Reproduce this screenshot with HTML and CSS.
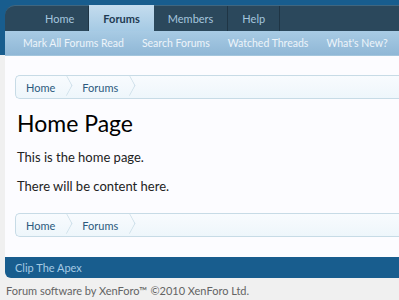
FILE: index.html
```html
<!DOCTYPE html>
<html lang="en">
<head>
    <meta charset="UTF-8">
    <title>Home Page</title>
    <link rel="stylesheet" href="styles.css">
</head>
<body>
    <div class="header">
        <div class="navTabs">
            <a class="tab">Home</a>
            <a class="tab selected">Forums</a>
            <a class="tab">Members</a>
            <a class="tab">Help</a>
        </div>
        <div class="subNav">
            <a>Mark All Forums Read</a>
            <a>Search Forums</a>
            <a>Watched Threads</a>
            <a>What's New?</a>
        </div>
    </div>
    <div class="content">
        <div class="breadcrumb">
            <span class="crumb">Home</span>
            <span class="crumb">Forums</span>
        </div>
        <h1>Home Page</h1>
        <p>This is the home page.</p>
        <p>There will be content here.</p>
        <div class="breadcrumb bottom">
            <span class="crumb">Home</span>
            <span class="crumb">Forums</span>
        </div>
    </div>
    <div class="footer">Clip The Apex</div>
    <div class="copyright">Forum software by XenForo&trade; &copy;2010 XenForo Ltd.</div>
</body>
</html>
```

FILE: styles.css
```css
body {
    margin: 0;
    font-family: Lato, sans-serif;
    background-color: #f0f0f0;
    color: #000;
}

.header {
    background-color: #185d8e;
    padding: 5px 0 0 5px;
}

.navTabs {
    display: flex;
    height: 26px;
    padding-left: 26px;
    background-color: #2b485c;
    border-top: 1px solid #40667f;
    border-top-left-radius: 10px;
    box-sizing: border-box;
}
.navTabs .tab {
    display: flex;
    align-items: center;
    padding: 0 14px;
    font-size: 11px;
    color: #a5c6de;
    border-right: 1px solid #1f3545;
}
.navTabs .tab.selected {
    margin-top: -1px;
    background: linear-gradient(#c4dcee, #a5cae4);
    color: #1d3a52;
    font-weight: bold;
    border-right: none;
}

.subNav {
    display: flex;
    gap: 18px;
    height: 24px;
    align-items: center;
    padding-left: 18px;
    background: linear-gradient(#a8cbe4, #8fb7d6);
    font-size: 10.5px;
    color: #edf4fa;
    white-space: nowrap;
}

.content {
    margin-left: 5px;
    padding: 19px 0 20px 10px;
    background-color: #fcfcff;
    border-top: 1px solid #a3c5dc;
}

.breadcrumb {
    display: flex;
    height: 24px;
    background: linear-gradient(#f8fbfe, #eef6fb);
    border: 1px solid #c7dbe6;
    border-right: none;
    border-radius: 5px 0 0 5px;
    box-sizing: border-box;
    align-items: center;
    padding-left: 10px;
}
.breadcrumb .crumb {
    position: relative;
    font-size: 11px;
    color: #2b5a7e;
    padding-right: 27px;
}
.breadcrumb .crumb::after {
    content: "";
    position: absolute;
    right: 8px;
    top: -3px;
    width: 14px;
    height: 14px;
    border-top: 1px solid #c7dbe6;
    border-right: 1px solid #c7dbe6;
    transform: scaleX(0.55) rotate(45deg);
}

h1 {
    margin: 10px 0 12px 2px;
    font-size: 23px;
    line-height: 28px;
    font-weight: normal;
    color: #000;
}

p {
    margin: 0 0 13px 2px;
    font-size: 13px;
    line-height: 16px;
    color: #222;
}

.breadcrumb.bottom {
    margin-top: 19px;
}

.footer {
    margin-left: 5px;
    height: 21px;
    padding-left: 10px;
    background-color: #185d8e;
    border-bottom-left-radius: 6px;
    color: #a5cae4;
    font-size: 11px;
    line-height: 21px;
}

.copyright {
    padding: 5px 0 0 6px;
    font-size: 11px;
    line-height: 16px;
    color: #646464;
}
```
